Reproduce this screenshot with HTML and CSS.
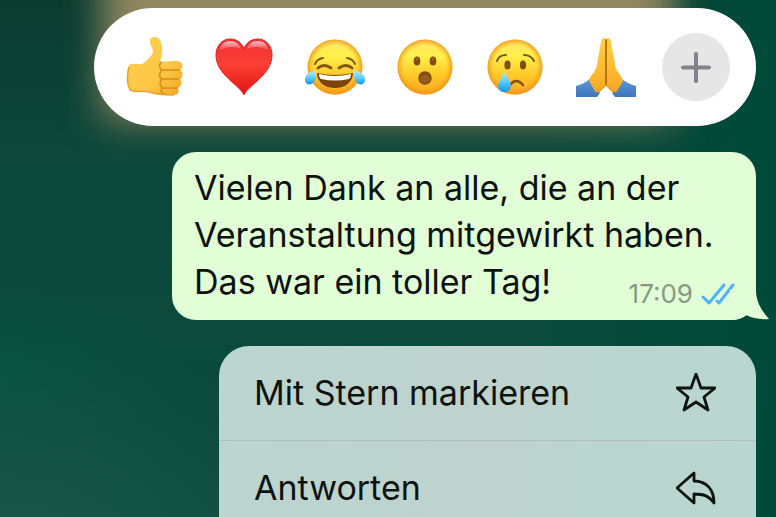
FILE: index.html
```html
<!DOCTYPE html>
<html lang="de">
<head>
<meta charset="utf-8">
<meta name="viewport" content="width=device-width, initial-scale=1">
<title>Chat</title>
<link rel="stylesheet" href="styles.css">
</head>
<body>
<svg class="defs" width="0" height="0" aria-hidden="true">
  <defs>
    <linearGradient id="face" x1="0" y1="0" x2="0" y2="1">
      <stop offset="0" stop-color="#ffe668"/><stop offset=".3" stop-color="#fff04a"/><stop offset=".65" stop-color="#ffc929"/><stop offset="1" stop-color="#fba51b"/>
    </linearGradient>
    <radialGradient id="rim">
      <stop offset=".78" stop-color="#f39a1c" stop-opacity="0"/><stop offset="1" stop-color="#f0911c" stop-opacity=".8"/>
    </radialGradient>
    <linearGradient id="heart" x1="0" y1="0" x2="0" y2="1">
      <stop offset="0" stop-color="#ee3035"/><stop offset=".45" stop-color="#fd3f35"/><stop offset="1" stop-color="#e01512"/>
    </linearGradient>
    <linearGradient id="shine" x1="0" y1="0" x2="0" y2="1">
      <stop offset="0" stop-color="#fff" stop-opacity=".7"/><stop offset="1" stop-color="#fff" stop-opacity="0"/>
    </linearGradient>
    <linearGradient id="tear" x1="0" y1="0" x2="0" y2="1">
      <stop offset="0" stop-color="#b5edff"/><stop offset=".5" stop-color="#5fcdfa"/><stop offset="1" stop-color="#1594e6"/>
    </linearGradient>
    <linearGradient id="skin" x1="0" y1="0" x2="1" y2="1">
      <stop offset="0" stop-color="#ffd04e"/><stop offset=".6" stop-color="#fdc845"/><stop offset="1" stop-color="#f0a824"/>
    </linearGradient>
    <linearGradient id="hand" x1="0" y1="0" x2="0" y2="1">
      <stop offset="0" stop-color="#ffcf45"/><stop offset=".6" stop-color="#fdbb30"/><stop offset="1" stop-color="#f5a823"/>
    </linearGradient>
    <linearGradient id="sleeve" x1="0" y1="0" x2="0" y2="1">
      <stop offset="0" stop-color="#5b98dc"/><stop offset="1" stop-color="#3e75b9"/>
    </linearGradient>
  </defs>
</svg>
<main class="chat">
  <div class="reactions" role="toolbar" aria-label="Reaktionen">
    <button class="reaction" type="button" aria-label="Daumen hoch">
      <svg viewBox="0 0 68 68">
        <path fill="url(#skin)" d="M30 9C30 5 32 4 35 4C39 4 41 8 42 13C43 19 41 25 40 29C45 28 51 28 57 28C63 28 64 35 60 37C64 39 63 45 60 46C63 49 61 54 58 55C60 59 58 62 54 62C46 62 38 62 31 59C25 57 20 58 13 58C9 58 7 52 7 44C7 37 8 32 11 31C15 30 19 32 22 31C27 28 33 22 33 18C33 15 30 13 30 9Z"/>
        <path fill="none" stroke="#d58d1e" stroke-width="1.6" stroke-linecap="round" d="M41 29C38 33 40 36 42 37H59M41 38C38 43 40 45 42 46H59M41 47C39 51 41 54 43 55H57M42 55C40 59 42 61 45 61"/>
        <path fill="none" stroke="#e5a22c" stroke-width="1.5" d="M10 57C16 60 23 57 29 59C37 62 45 62 54 62M9 34C7 42 7 51 10 57"/>
      </svg>
    </button>
    <button class="reaction" type="button" aria-label="Herz">
      <svg viewBox="0 0 68 68">
        <path fill="url(#heart)" stroke="#e2201f" stroke-width="1" d="M34 62C30 52 6 42 6 22C6 13 12 6 20 6C27 6 32 10 34 16C36 10 41 6 48 6C56 6 62 13 62 22C62 42 38 52 34 62Z"/>
        <path fill="url(#shine)" d="M10 18C10 12 14 8 20 8C26 8 29 11 31 16C26 13 15 13 10 18ZM37 16C39 11 42 8 48 8C54 8 58 12 58 18C53 13 42 13 37 16Z"/>
      </svg>
    </button>
    <button class="reaction" type="button" aria-label="Freudentränen">
      <svg viewBox="0 0 68 68">
        <circle cx="34" cy="34" r="27.5" fill="url(#face)"/><circle cx="34" cy="34" r="27.5" fill="url(#rim)"/>
        <g fill="none" stroke="#87500f" stroke-linecap="round"><path stroke-width="2" d="M14 31Q16 26 22 25M46 25Q52 26 54 31"/><path stroke-width="2.8" d="M17 35Q23 30 30 35M38 35Q45 30 51 35"/></g>
        <path fill="#7b460b" d="M16 40Q34 44 52 40C52 49 44 55 34 55S16 49 16 40Z"/>
        <path fill="#fff" d="M18 41Q34 45 50 41Q50 45 48 46Q34 49 20 46Q18 45 18 41Z"/>
        <path fill="url(#tear)" d="M15 38C8 38 4 42 4 47C4 52 10 53 13 49C15 46 15 42 15 38ZM53 38C60 38 64 42 64 47C64 52 58 53 55 49C53 46 53 42 53 38Z"/>
      </svg>
    </button>
    <button class="reaction" type="button" aria-label="Erstaunt">
      <svg viewBox="0 0 68 68">
        <circle cx="34" cy="34" r="27.5" fill="url(#face)"/><circle cx="34" cy="34" r="27.5" fill="url(#rim)"/>
        <g fill="#804b0d"><ellipse cx="26" cy="28" rx="3.3" ry="4.6"/><ellipse cx="42" cy="28" rx="3.3" ry="4.6"/><circle cx="34" cy="45" r="6.7"/></g>
        <ellipse cx="34" cy="46" rx="5" ry="4.5" fill="#935c18"/><circle cx="26" cy="26" r="1" fill="#a97431"/><circle cx="42" cy="26" r="1" fill="#a97431"/>
      </svg>
    </button>
    <button class="reaction" type="button" aria-label="Traurig">
      <svg viewBox="0 0 68 68">
        <circle cx="34" cy="34" r="27.5" fill="url(#face)"/><circle cx="34" cy="34" r="27.5" fill="url(#rim)"/>
        <g fill="none" stroke="#87500f" stroke-width="2" stroke-linecap="round"><path d="M16 28Q18 22 25 22M43 22Q50 22 53 28"/><path stroke-width="2.4" d="M29 52Q35 44 42 52"/></g>
        <g fill="#804b0d"><ellipse cx="26.500" cy="32" rx="3.1" ry="4.5"/><ellipse cx="42" cy="32" rx="3.1" ry="4.5"/></g>
        <path fill="url(#tear)" d="M23 38C22 44 17 48 17 53C17 57 20 59 23 59S30 57 30 53C30 48 25 44 23 38Z"/>
      </svg>
    </button>
    <button class="reaction" type="button" aria-label="Gefaltete Hände">
      <svg viewBox="0 0 68 68">
        <path fill="url(#sleeve)" d="M4 53Q12 51 18 46L28 60L25 64H4ZM64 53Q56 51 50 46L40 60L43 64H64Z"/>
        <path fill="url(#hand)" d="M34 6C32 4 29 5 29 9L25 31C25 38 18 42 17 48L23 58C28 61 31 54 34 52C37 54 40 61 45 58L51 48C50 42 43 38 43 31L39 9C39 5 36 4 34 6Z"/>
        <path fill="none" stroke="#b06d12" stroke-width="1.8" stroke-linecap="round" d="M34 7V52"/>
        <path fill="none" stroke="#e39a26" stroke-width="1.4" d="M23 58C28 61 31 54 34 52C37 54 40 61 45 58"/>
      </svg>
    </button>
    <button class="reaction reaction-more" type="button" aria-label="Weitere Reaktionen">
      <svg viewBox="0 0 68 68"><path fill="none" stroke="#828287" stroke-width="4" stroke-linecap="round" d="M34 21V48M21 34.500H47"/></svg>
    </button>
  </div>

  <article class="bubble">
    <p class="message">Vielen Dank an alle, die an der<br>Veranstaltung mitgewirkt haben.<br>Das war ein toller Tag!</p>
    <div class="meta">
      <time>17:09</time>
      <svg class="checks" viewBox="0 0 34 22" role="img" aria-label="Gelesen"><path fill="none" stroke="#4fb2f7" stroke-width="3" stroke-linecap="round" stroke-linejoin="round" d="M2 14L8 20L23 2M16 18L18 20L32 2"/></svg>
    </div>
    <svg class="tail" viewBox="0 0 40 40" aria-hidden="true"><path d="M0 10L26 0V10C26 23 33 32 39 39C31 40 22 38 16 35C11 39 6 40 0 40Z"/></svg>
  </article>

  <div class="menu" role="menu">
    <button class="menu-item" type="button" role="menuitem">
      <span>Mit Stern markieren</span>
      <svg viewBox="0 0 40 40"><path d="M20 1L25 15H39L28 24L32 37L20 29L8 37L12 24L1 15H15Z"/></svg>
    </button>
    <button class="menu-item" type="button" role="menuitem">
      <span>Antworten</span>
      <svg viewBox="0 0 40 40"><path d="M1 20L18 5V13C31 13 38 22 38 35C33 28 28 26 18 26V35Z"/></svg>
    </button>
  </div>
</main>
</body>
</html>
```
FILE: styles.css
```css
* {
  box-sizing: border-box;
}

body {
  margin: 0;
  height: 100vh;
  overflow: hidden;
  font-family: Inter, "Liberation Sans", sans-serif;
  color: #0d120f;
  background:
    radial-gradient(ellipse at 0% 115%, #1f5b4e 0, transparent 32%),
    radial-gradient(ellipse at 0% 72%, #055140 0, transparent 16%),
    linear-gradient(90deg, transparent 70%, #004a39 98%),
    linear-gradient(180deg, #0b3c30 0, #0d483a 30%, #084b3d 100%);
}

.defs {
  position: absolute;
}

.chat {
  display: flex;
  flex-direction: column;
  gap: 26px;
  padding: 8px 20px 0 94px;
  position: relative;
  isolation: isolate;
}

/* Warm glow behind the reaction bar */
.chat::before {
  content: "";
  position: absolute;
  z-index: -1;
  top: -60px;
  left: 102px;
  right: 102px;
  height: 180px;
  background: #90865f;
  filter: blur(18px);
}

button {
  margin: 0;
  border: 0;
  padding: 0;
  font: inherit;
  color: inherit;
  background: none;
}

.reactions {
  display: flex;
  align-items: center;
  justify-content: space-between;
  padding: 25px 26px;
  border-radius: 60px;
  background: #fff;
}

.reaction {
  flex: none;
  width: 68px;
  height: 68px;
  border-radius: 50%;
}

.reaction svg {
  display: block;
  width: 100%;
}

.reaction-more {
  background: #e6e6e6;
}

.bubble {
  position: relative;
  margin-left: 78px;
  padding: 12px 22px 15px;
  border-radius: 24px;
  background: #e1fed6;
}

.message {
  margin: 0;
  font-size: 34px;
  line-height: 47px;
  white-space: nowrap;
}

.meta {
  position: absolute;
  right: 21px;
  bottom: 12px;
  display: flex;
  align-items: center;
  gap: 8px;
  font-size: 26px;
  line-height: 28px;
  color: #899a84;
}

.checks {
  width: 34px;
  height: 22px;
}

.tail {
  position: absolute;
  right: -14px;
  bottom: 0;
  width: 40px;
  height: 40px;
  fill: #e1fed6;
}

.menu {
  margin-left: 125px;
  border-radius: 30px 30px 0 0;
  overflow: hidden;
  background: linear-gradient(100deg, #bbd5cf 0, #bdd3ce 35%, #bfd2ce 50%, #bad5cf 70%, #b9d6cf 100%);
}

.menu-item {
  display: flex;
  align-items: center;
  justify-content: space-between;
  width: 100%;
  padding: 24px 40px 24px 35px;
  font-size: 34px;
  line-height: 46px;
}

.menu-item + .menu-item {
  border-top: 1px solid #b5bdb9;
}

.menu-item svg {
  width: 40px;
  height: 40px;
  fill: none;
  stroke: #0d1311;
  stroke-width: 2.8;
  stroke-linejoin: round;
}
```
